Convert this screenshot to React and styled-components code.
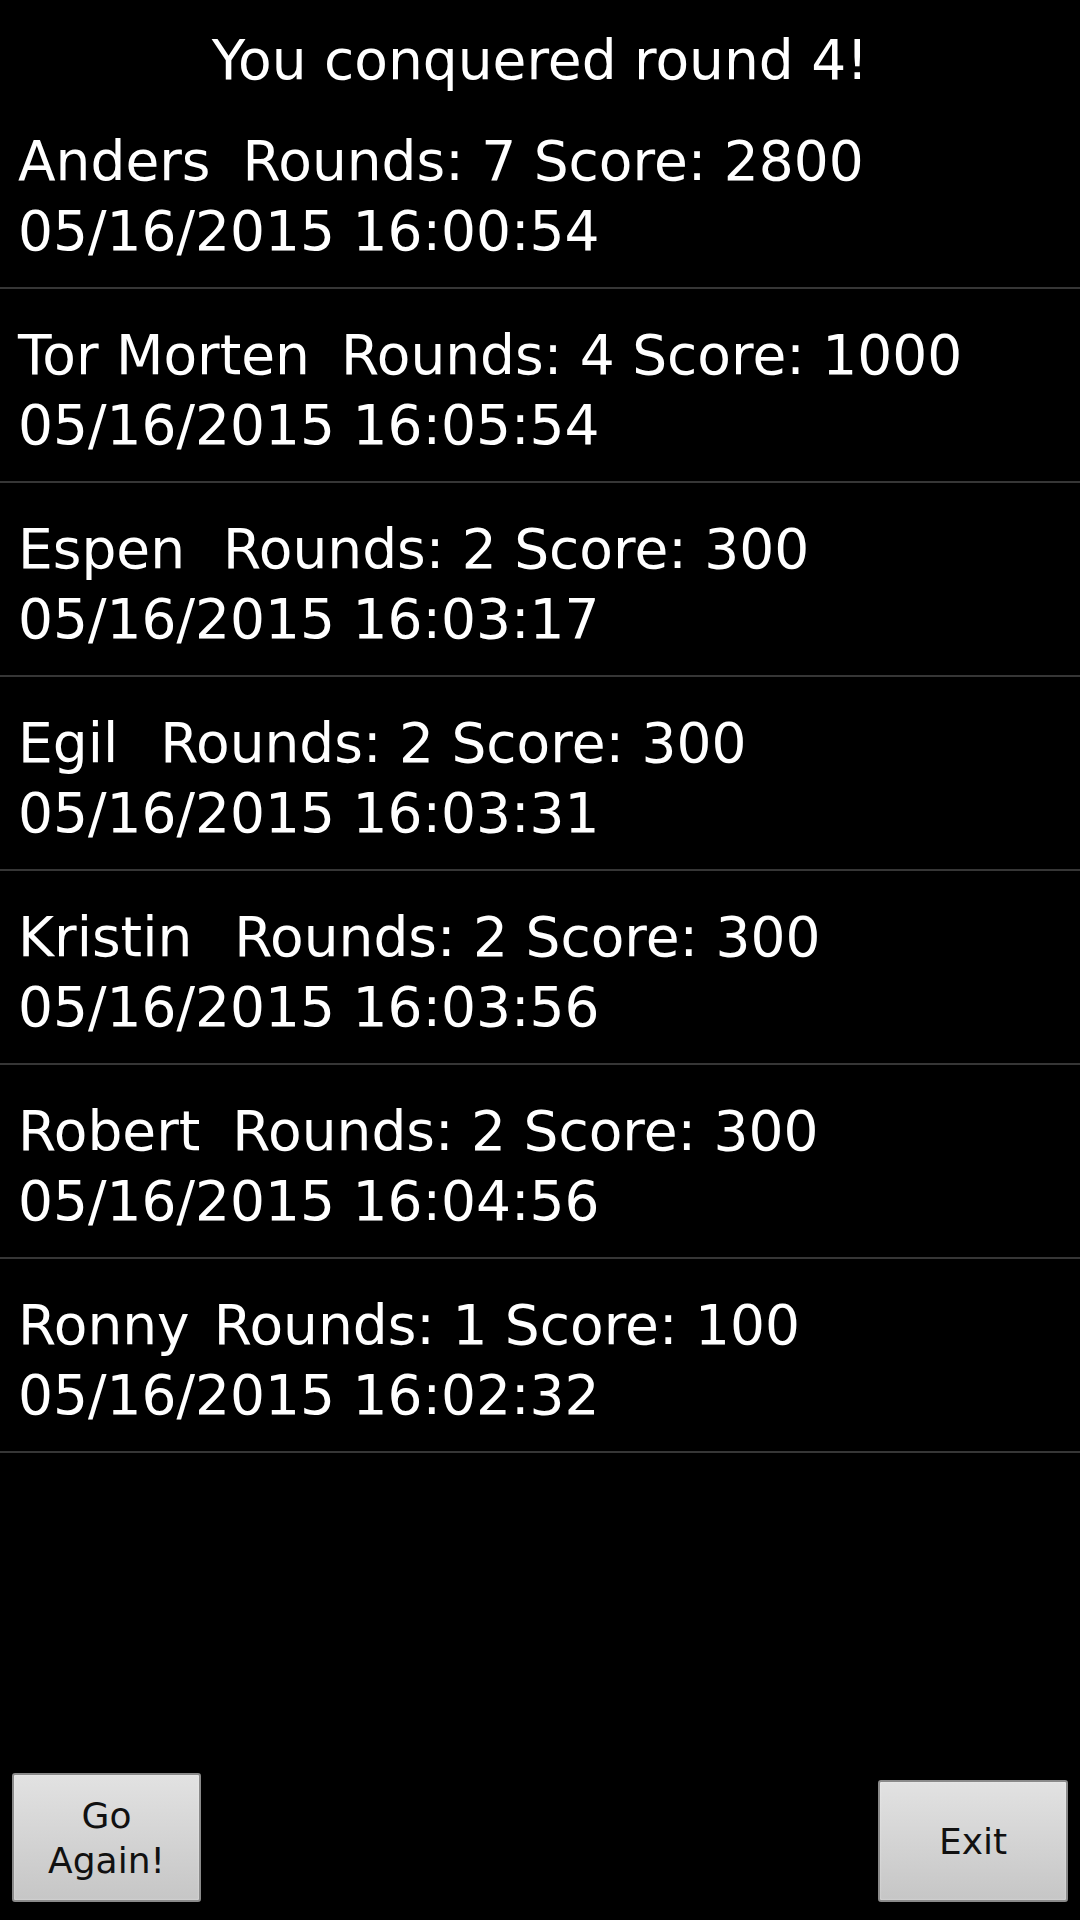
import React from "react";
import styled, { createGlobalStyle } from "styled-components";

const Global = createGlobalStyle`
  html, body { margin: 0; padding: 0; background: #000; }
  body { font-family: "DejaVu Sans", "Liberation Sans", sans-serif; }
  #root { min-height: 1920px; }
`;

const Screen = styled.div`
  width: 1080px;
  height: 1920px;
  background: #000;
  color: #fff;
  display: flex;
  flex-direction: column;
  box-sizing: border-box;
`;

const Title = styled.h1`
  margin: 0;
  padding-top: 25px;
  font-weight: normal;
  font-size: 55px;
  line-height: 70px;
  text-align: center;
`;

const List = styled.ul`
  list-style: none;
  margin: 0;
  padding: 0;
  flex: 1;
`;

const Row = styled.li`
  padding: 31px 15px 21px 18px;
  border-bottom: 2px solid #363636;
  font-size: 55px;
  line-height: 70px;
  white-space: nowrap;
`;

const Line = styled.div``;

const Name = styled.span`
  margin-right: ${(p) => p.$gap}px;
`;

const ButtonBar = styled.div`
  display: flex;
  justify-content: space-between;
  align-items: flex-end;
  padding: 0 12px 18px 12px;
`;

const Button = styled.button`
  width: ${(p) => p.$w}px;
  min-height: ${(p) => p.$h}px;
  padding: 17px 8px;
  box-sizing: border-box;
  font-family: "DejaVu Sans", "Liberation Sans", sans-serif;
  font-size: 36px;
  line-height: 45px;
  color: #111;
  background: linear-gradient(180deg, #e2e2e2 0%, #d4d4d4 50%, #c6c6c6 100%);
  border: 2px solid #8a8a8a;
  border-radius: 3px;
  box-shadow: inset 0 0 2px rgba(255, 255, 255, 0.6);
  text-align: center;
  cursor: pointer;
`;

const scores = [
  { name: "Anders", gap: 32, rounds: 7, score: 2800, date: "05/16/2015 16:00:54" },
  { name: "Tor Morten", gap: 31, rounds: 4, score: 1000, date: "05/16/2015 16:05:54" },
  { name: "Espen", gap: 38, rounds: 2, score: 300, date: "05/16/2015 16:03:17" },
  { name: "Egil", gap: 42, rounds: 2, score: 300, date: "05/16/2015 16:03:31" },
  { name: "Kristin", gap: 42, rounds: 2, score: 300, date: "05/16/2015 16:03:56" },
  { name: "Robert", gap: 32, rounds: 2, score: 300, date: "05/16/2015 16:04:56" },
  { name: "Ronny", gap: 24, rounds: 1, score: 100, date: "05/16/2015 16:02:32" },
];

export default function App() {
  return (
    <>
      <Global />
      <Screen>
        <Title>You conquered round 4!</Title>
        <List>
          {scores.map((s) => (
            <Row key={s.name}>
              <Line>
                <Name $gap={s.gap}>{s.name}</Name>
                Rounds: {s.rounds} Score: {s.score}
              </Line>
              <Line>{s.date}</Line>
            </Row>
          ))}
        </List>
        <ButtonBar>
          <Button $w={189} $h={129}>
            Go
            <br />
            Again!
          </Button>
          <Button $w={190} $h={122}>Exit</Button>
        </ButtonBar>
      </Screen>
    </>
  );
}
